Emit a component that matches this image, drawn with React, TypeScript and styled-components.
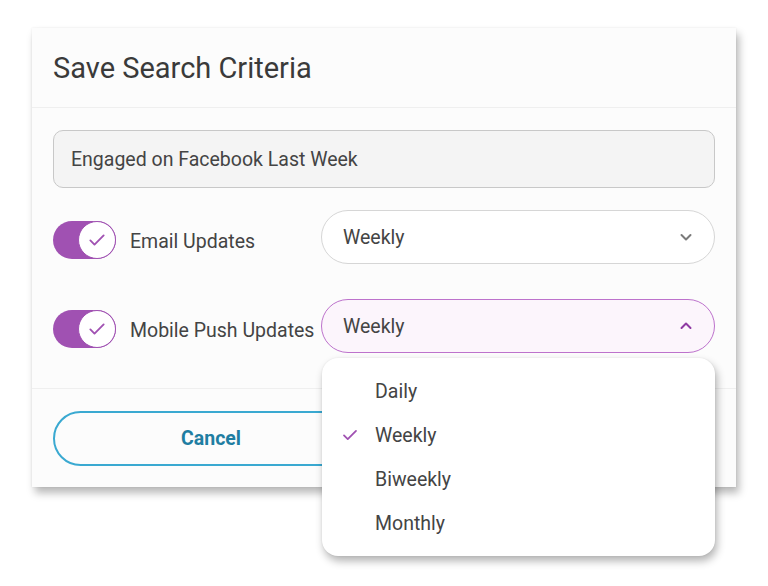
import React from 'react'
import styled, { createGlobalStyle } from 'styled-components';

const purple = '#a051b2';

const GlobalStyle = createGlobalStyle`
  * {
    box-sizing: border-box;
  }
  body {
    margin: 0;
    background: #ffffff;
    font-family: Roboto, "Liberation Sans", sans-serif;
  }
`;

const options = ['Daily', 'Weekly', 'Biweekly', 'Monthly'];

function Check(props: { size: number, color: string, width?: number }) {
    return (
        <svg width={props.size} height={props.size} viewBox="0 0 24 24" fill="none"
            stroke={props.color} strokeWidth={props.width || 2.6} strokeLinecap="round" strokeLinejoin="round">
            <path d="M4 12.5l5 5L20 6.5" />
        </svg>
    )
}

function Chevron(props: { up?: boolean, color: string }) {
    return (
        <svg width="14" height="14" viewBox="0 0 14 14" fill="none"
            stroke={props.color} strokeWidth="2" strokeLinecap="round" strokeLinejoin="round">
            {props.up ? <path d="M2.5 9l4.5-4.5L11.5 9" /> : <path d="M2.5 5l4.5 4.5L11.5 5" />}
        </svg>
    )
}

function Toggle() {
    return (
        <Track>
            <Knob>
                <Check size={20} color={purple} width={2.2} />
            </Knob>
        </Track>
    )
}

export default function App() {
    return (
        <>
            <GlobalStyle />
            <Page>
                <Card>
                    <Header>Save Search Criteria</Header>
                    <Body>
                        <NameInput>Engaged on Facebook Last Week</NameInput>
                        <Row>
                            <ToggleLabel>
                                <Toggle />
                                <Label>Email Updates</Label>
                            </ToggleLabel>
                            <SelectWrap>
                                <Select open={false}>
                                    <span>Weekly</span>
                                    <Chevron color="#7a7a7a" />
                                </Select>
                            </SelectWrap>
                        </Row>
                        <Row>
                            <ToggleLabel>
                                <Toggle />
                                <Label>Mobile Push Updates</Label>
                            </ToggleLabel>
                            <SelectWrap>
                                <Select open={true}>
                                    <span>Weekly</span>
                                    <Chevron up color="#8f3aa3" />
                                </Select>
                                <Menu>
                                    {options.map((o) => (
                                        <MenuItem key={o}>
                                            <CheckSlot>
                                                {o === 'Weekly' ? <Check size={18} color={purple} width={2.4} /> : null}
                                            </CheckSlot>
                                            {o}
                                        </MenuItem>
                                    ))}
                                </Menu>
                            </SelectWrap>
                        </Row>
                    </Body>
                    <Footer>
                        <OutlineButton>Cancel</OutlineButton>
                        <OutlineButton>Save</OutlineButton>
                    </Footer>
                </Card>
            </Page>
        </>
    )
}

const Page = styled.div`
  min-height: 586px;
  padding: 28px 0 0 32px;
`;

const Card = styled.div`
  width: 704px;
  background: #fcfcfc;
  box-shadow: 3px 6px 8px rgba(0, 0, 0, 0.28), 0 0 2px rgba(0, 0, 0, 0.08);
`;

const Header = styled.div`
  height: 80px;
  display: flex;
  align-items: center;
  padding-left: 21px;
  font-size: 29px;
  color: #3a3a3a;
  border-bottom: 1px solid #efefef;
`;

const Body = styled.div`
  display: flex;
  flex-direction: column;
  gap: 22px;
  padding: 22px 21px 35px 21px;
  border-bottom: 1px solid #efefef;
`;

const NameInput = styled.div`
  height: 58px;
  display: flex;
  align-items: center;
  padding-left: 17px;
  background: #f4f4f4;
  border: 1.5px solid #c8c8c8;
  border-radius: 10px;
  font-size: 19.5px;
  color: #444;
`;

const Row = styled.div`
  display: flex;
  align-items: center;
  justify-content: space-between;
  & + & {
    margin-top: 13px;
  }
`;

const ToggleLabel = styled.div`
  display: flex;
  align-items: center;
  gap: 14px;
  padding-top: 6px;
`;

const Track = styled.div`
  width: 63px;
  height: 38px;
  border-radius: 19px;
  background: ${purple};
  display: flex;
  justify-content: flex-end;
  align-items: center;
`;

const Knob = styled.div`
  width: 38px;
  height: 38px;
  border-radius: 50%;
  background: #fff;
  border: 1.5px solid ${purple};
  display: flex;
  align-items: center;
  justify-content: center;
`;

const Label = styled.span`
  font-size: 19.5px;
  color: #444;
  padding-top: 3px;
`;

const SelectWrap = styled.div`
  position: relative;
  width: 394px;
`;

const Select = styled.div<{ open: boolean }>`
  height: 54px;
  display: flex;
  align-items: center;
  justify-content: space-between;
  padding: 0 21px 0 21px;
  border-radius: 27px;
  border: 1.5px solid ${(p) => (p.open ? '#bd72cc' : '#d6d6d6')};
  background: ${(p) => (p.open ? '#fcf5fc' : '#ffffff')};
  font-size: 19.5px;
  color: #444;
`;

const Menu = styled.div`
  position: absolute;
  top: 59px;
  left: 1px;
  width: 393px;
  height: 198px;
  padding: 11px 0;
  background: #fff;
  border-radius: 16px;
  box-shadow: 2px 5px 8px rgba(0, 0, 0, 0.3), 0 0 2px rgba(0, 0, 0, 0.08);
  display: flex;
  flex-direction: column;
  z-index: 2;
`;

const MenuItem = styled.div`
  height: 44px;
  display: flex;
  align-items: center;
  font-size: 19.5px;
  color: #444;
`;

const CheckSlot = styled.span`
  width: 53px;
  padding-left: 19px;
  display: flex;
  align-items: center;
`;

const Footer = styled.div`
  display: flex;
  gap: 30px;
  padding: 22px 21px 21px 21px;
`;

const OutlineButton = styled.div`
  flex: 1;
  height: 55px;
  display: flex;
  align-items: center;
  justify-content: center;
  border: 2px solid #3aa9d1;
  border-radius: 28px;
  font-size: 19.5px;
  font-weight: 700;
  color: #1f7ea2;
`;
